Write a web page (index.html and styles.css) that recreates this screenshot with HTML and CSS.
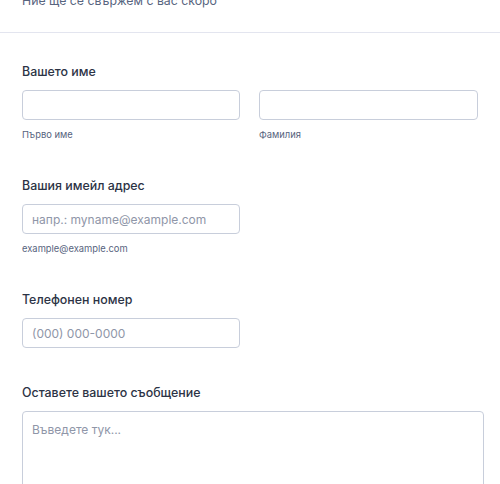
FILE: index.html
```html
<!DOCTYPE html>
<html lang="bg">
<head>
<meta charset="utf-8">
<title>Форма за контакт</title>
<link rel="stylesheet" href="styles.css">
</head>
<body>
<div class="page">
  <header class="form-header">
    <p class="subtitle">Ние ще се свържем с вас скоро</p>
  </header>
  <form class="form-body">
    <div class="field">
      <label class="label">Вашето име</label>
      <div class="name-row">
        <div class="sub">
          <input class="input" type="text">
          <span class="sublabel">Първо име</span>
        </div>
        <div class="sub">
          <input class="input" type="text">
          <span class="sublabel">Фамилия</span>
        </div>
      </div>
    </div>
    <div class="field">
      <label class="label">Вашия имейл адрес</label>
      <div class="sub">
        <input class="input short" type="email" placeholder="напр.: myname@example.com">
        <span class="sublabel">example@example.com</span>
      </div>
    </div>
    <div class="field field-last">
      <label class="label">Телефонен номер</label>
      <input class="input short" type="tel" placeholder="(000) 000-0000">
    </div>
    <div class="field">
      <label class="label">Оставете вашето съобщение</label>
      <textarea class="textarea" placeholder="Въведете тук..."></textarea>
    </div>
  </form>
</div>
</body>
</html>
```

FILE: styles.css
```css
* { box-sizing: border-box; }
html, body { margin: 0; padding: 0; background: #fff; overflow: hidden; }
body {
  font-family: Inter, "Noto Sans", sans-serif;
  color: #2c3345;
}
.page { width: 500px; }
.form-header {
  margin-top: -9px;
  padding: 0 22px 21px;
  border-bottom: 1px solid #e3e5ef;
}
.subtitle {
  margin: 0;
  font-size: 12.3px;
  line-height: 20px;
  color: #57647e;
}
.form-body {
  padding: 29px 16px 0 22px;
  display: flex;
  flex-direction: column;
  gap: 34px;
}
.field { display: flex; flex-direction: column; }
.field-last { margin-bottom: 1px; }
.label {
  font-size: 12.4px;
  font-weight: 500;
  line-height: 20px;
  margin-bottom: 8px;
  color: #2c3345;
}
.name-row {
  display: grid;
  grid-template-columns: 218px 219px;
  column-gap: 19px;
}
.sub { display: flex; flex-direction: column; }
.input {
  height: 30px;
  width: 100%;
  border: 1px solid #c8cedb;
  border-radius: 4px;
  padding: 0 9px;
  font-family: inherit;
  font-size: 12px;
  color: #2c3345;
  background: #fff;
  outline: none;
}
.input.short { width: 218px; }
.input::placeholder, .textarea::placeholder { color: #8f96a8; }
.sublabel {
  margin-top: 8px;
  font-size: 9.4px;
  line-height: 14px;
  color: #57647e;
}
.textarea {
  width: 462px;
  height: 120px;
  border: 1px solid #c8cedb;
  border-radius: 4px;
  padding: 8px 9px;
  font-family: inherit;
  font-size: 12px;
  line-height: 20px;
  resize: none;
  outline: none;
}
```
